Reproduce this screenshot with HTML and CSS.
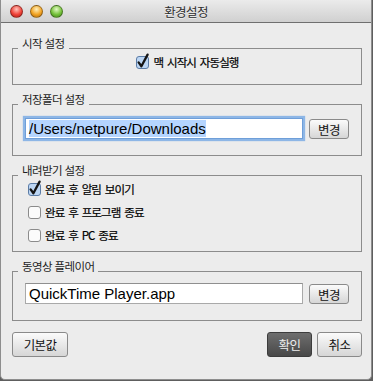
FILE: index.html
```html
<!DOCTYPE html>
<html lang="ko">
<head>
    <meta charset="UTF-8">
    <title>환경설정</title>
    <link rel="stylesheet" href="styles.css">
</head>
<body>
    <div class="window">
        <header class="titlebar">
            <div class="lights">
                <span class="light red"></span>
                <span class="light yellow"></span>
                <span class="light green"></span>
            </div>
            <div class="title">환경설정</div>
            <div></div>
        </header>

        <main class="content">
            <section class="group group-start">
                <div class="group-title">시작 설정</div>
                <div class="group-body center">
                    <label class="check">
                        <svg class="box" width="15" height="16" viewBox="0 0 15 16">
                            <rect class="on" x="1.5" y="3.5" width="12" height="12" rx="2.5"/>
                            <path class="mark" d="M3.6 9.4 L6.4 13.2 L12.6 1.6"/>
                        </svg>
                        맥 시작시 자동실행
                    </label>
                </div>
            </section>

            <section class="group group-field group-folder">
                <div class="group-title">저장폴더 설정</div>
                <div class="group-body field-row">
                    <div class="field focused"><span class="selected">/Users/netpure/Downloads</span></div>
                    <button class="btn small">변경</button>
                </div>
            </section>

            <section class="group group-download">
                <div class="group-title">내려받기 설정</div>
                <div class="group-body list">
                    <label class="check">
                        <svg class="box" width="15" height="16" viewBox="0 0 15 16">
                            <rect class="on" x="1.5" y="3.5" width="12" height="12" rx="2.5"/>
                            <path class="mark" d="M3.6 9.4 L6.4 13.2 L12.6 1.6"/>
                        </svg>
                        완료 후 알림 보이기
                    </label>
                    <label class="check">
                        <svg class="box" width="15" height="16" viewBox="0 0 15 16">
                            <rect class="off" x="1.5" y="3.5" width="12" height="12" rx="2.5"/>
                        </svg>
                        완료 후 프로그램 종료
                    </label>
                    <label class="check">
                        <svg class="box" width="15" height="16" viewBox="0 0 15 16">
                            <rect class="off" x="1.5" y="3.5" width="12" height="12" rx="2.5"/>
                        </svg>
                        완료 후 PC 종료
                    </label>
                </div>
            </section>

            <section class="group group-field group-player">
                <div class="group-title">동영상 플레이어</div>
                <div class="group-body field-row">
                    <div class="field">QuickTime Player.app</div>
                    <button class="btn small">변경</button>
                </div>
            </section>

            <footer class="actions">
                <button class="btn wide">기본값</button>
                <div class="actions-right">
                    <button class="btn primary">확인</button>
                    <button class="btn">취소</button>
                </div>
            </footer>
        </main>
    </div>
</body>
</html>
```

FILE: styles.css
```css
* {
    margin: 0;
    padding: 0;
    box-sizing: border-box;
}

body {
    background-color: #5e5e5e;
    font-family: "Liberation Sans", "Noto Sans CJK KR", sans-serif;
    color: #1e1e1e;
}

.window {
    width: 372px;
    height: 380px;
    background-color: #ececec;
    border: 1px solid #8e8e8e;
    border-top: none;
    border-radius: 0 0 5px 5px;
    overflow: hidden;
}

/* title bar */
.titlebar {
    height: 23px;
    display: grid;
    grid-template-columns: 1fr auto 1fr;
    align-items: center;
    background: linear-gradient(to bottom, #ebebeb, #d0d0d0);
    border-bottom: 1px solid #6f6f6f;
}

.lights {
    display: flex;
    gap: 7px;
    padding-left: 9px;
}

.light {
    width: 13px;
    height: 13px;
    border-radius: 50%;
    border: 1px solid rgba(0, 0, 0, 0.35);
}

.red {
    background: radial-gradient(circle at 50% 30%, #ffc4bb 0, #f0443a 55%, #a51c12 100%);
}

.yellow {
    background: radial-gradient(circle at 50% 30%, #fff0bb 0, #f2a425 55%, #a8660a 100%);
}

.green {
    background: radial-gradient(circle at 50% 30%, #e2fac4 0, #76c23c 55%, #3f7f17 100%);
}

.title {
    font-family: "Noto Sans CJK KR", sans-serif;
    font-size: 12.5px;
    letter-spacing: -0.6px;
    color: #2e2e2e;
    text-shadow: 0 1px 0 rgba(255, 255, 255, 0.6);
}

/* content */
.content {
    padding: 25px 9px 0 11px;
}

.group {
    border: 1px solid #8c8c8c;
    margin-bottom: 19px;
}

.group-title {
    width: fit-content;
    margin: -13px 0 0 5px;
    padding: 0 4px;
    line-height: 14px;
    font-family: "Noto Sans CJK KR", sans-serif;
    font-size: 11.5px;
    letter-spacing: -0.6px;
    color: #1e1e1e;
    background-color: #ececec;
}

.group-body.center {
    display: flex;
    justify-content: center;
    padding: 4px 0 14px;
}

.group-body.list {
    display: flex;
    flex-direction: column;
    gap: 7px;
    padding: 4px 0 8px 14px;
}

.field-row {
    display: flex;
    align-items: center;
    gap: 6px;
    padding: 12px 0 16px 12px;
}

.group-player .field-row {
    padding-top: 10px;
}

.check {
    display: flex;
    align-items: center;
    gap: 3px;
    height: 16px;
    font-family: "Noto Sans CJK KR", sans-serif;
    font-size: 11.5px;
    letter-spacing: -0.9px;
    word-spacing: 1.5px;
    color: #000;
    -webkit-text-stroke: 0.2px #000;
}

.box {
    flex-shrink: 0;
    margin-top: -3px;
}

.box rect.off {
    fill: #fbfbfb;
    stroke: #8b8b8b;
}

.box rect.on {
    fill: #bcd6f4;
    stroke: #5b7ca6;
}

.box .mark {
    fill: none;
    stroke: #151515;
    stroke-width: 2.3;
    stroke-linecap: round;
    stroke-linejoin: round;
}

/* text fields */
.field {
    width: 278px;
    height: 21px;
    padding: 0 3px;
    background-color: #fff;
    border: 1px solid #a9a9a9;
    border-top-color: #8f8f8f;
    font-family: "Liberation Sans", sans-serif;
    font-size: 15px;
    line-height: 19px;
    color: #000;
    white-space: nowrap;
}

.field.focused {
    border-color: #6f9fd9;
    box-shadow: 0 0 1px 2px #8db6e6;
}

.selected {
    background-color: #b5d5ff;
}

/* buttons */
.btn {
    height: 20px;
    width: 45px;
    font-family: "Noto Sans CJK KR", sans-serif;
    font-size: 12.5px;
    letter-spacing: -0.6px;
    color: #111;
    background: linear-gradient(to bottom, #fbfbfb, #d6d6d6);
    border: 1px solid #8a8a8a;
    border-radius: 3px;
}

.btn.small {
    width: 40px;
}

.actions {
    display: flex;
    justify-content: space-between;
    align-items: center;
    margin-top: -8px;
}

.actions .btn {
    height: 25px;
}

.btn.wide {
    width: 56px;
}

.actions-right {
    display: flex;
    gap: 5px;
}

.btn.primary {
    color: #eeeeee;
    background: linear-gradient(to bottom, #6e6e6e, #484848);
    border-color: #3c3c3c;
}
```
